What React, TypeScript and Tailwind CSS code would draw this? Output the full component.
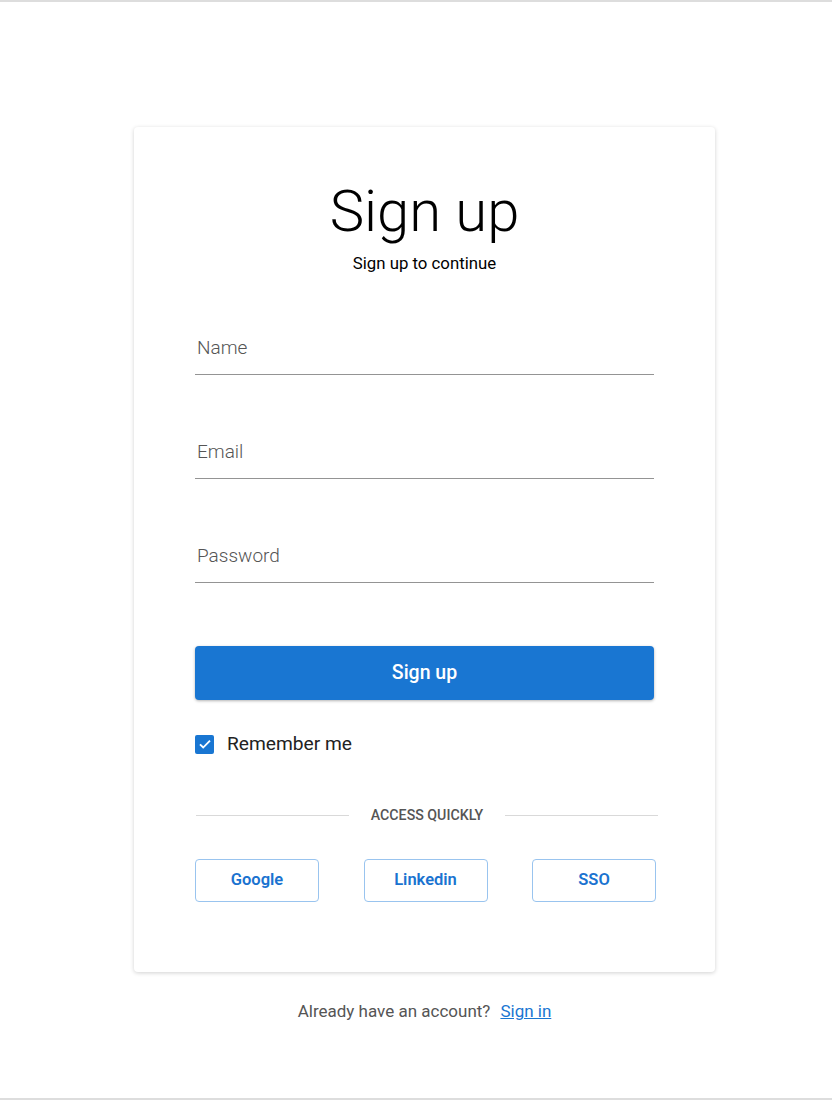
import { useState } from "react";

const FIELDS = ["Name", "Email", "Password"];
const PROVIDERS = ["Google", "Linkedin", "SSO"];

export default function App() {
  const [remember, setRemember] = useState(true);

  return (
    <div
      className="h-[1100px] border-y-2 border-[#dddddd] bg-white flex flex-col items-center pl-[17px]"
      style={{ fontFamily: "Roboto, 'Liberation Sans', sans-serif" }}
    >
      <div className="mt-[125px] w-[581px] rounded-[4px] bg-white shadow-[0_1px_4px_rgba(0,0,0,0.18)] px-[61px] pt-[48px] pb-[70px]">
        <h1 className="text-center text-[58px] leading-[72px] font-light text-black">Sign up</h1>
        <p className="mt-[4px] text-center text-[16.8px] leading-[24px] text-black">Sign up to continue</p>

        <div className="mt-[61px] flex flex-col gap-[65px]">
          {FIELDS.map((f) => (
            <div key={f} className="border-b border-[#949494] pb-[13px] pl-[2px]">
              <span className="text-[19px] leading-[24px] font-light text-[#555555]">{f}</span>
            </div>
          ))}
        </div>

        <button className="mt-[63px] w-full h-[54px] rounded-[4px] bg-[#1976d2] text-white text-[19.5px] font-medium shadow-[0_1px_3px_rgba(0,0,0,0.3)]">
          Sign up
        </button>

        <label className="mt-[32px] flex items-center gap-[13px] cursor-pointer">
          <span
            onClick={() => setRemember(!remember)}
            className="w-[19px] h-[19px] rounded-[2px] bg-[#1976d2] flex items-center justify-center"
          >
            {remember && (
              <svg width="16" height="16" viewBox="0 0 24 24" fill="none" stroke="white" strokeWidth="2.8">
                <path d="M4.5 12.5l4.8 4.8L19.5 7" />
              </svg>
            )}
          </span>
          <span className="text-[19.2px] leading-[24px] text-[#222222]">Remember me</span>
        </label>

        <div className="mt-[49px] flex items-center mr-[-4px] ml-[1px]">
          <div className="flex-1 h-px bg-[#d9d9d9]" />
          <span className="px-[22px] text-[14.2px] font-medium text-[#555555] leading-[20px]">ACCESS QUICKLY</span>
          <div className="flex-1 h-px bg-[#d9d9d9]" />
        </div>

        <div className="mt-[34px] mr-[-2px] flex justify-between">
          {PROVIDERS.map((p) => (
            <button
              key={p}
              className="w-[124px] h-[43px] rounded-[4px] border border-[#99c4ef] text-[#1a73d0] text-[16.5px] font-semibold"
            >
              {p}
            </button>
          ))}
        </div>
      </div>

      <p className="mt-[27px] text-[17px] leading-[24px] text-[#555555]">
        Already have an account?
        <a href="#" className="ml-[10px] text-[#1976d2] underline">
          Sign in
        </a>
      </p>
    </div>
  );
}
